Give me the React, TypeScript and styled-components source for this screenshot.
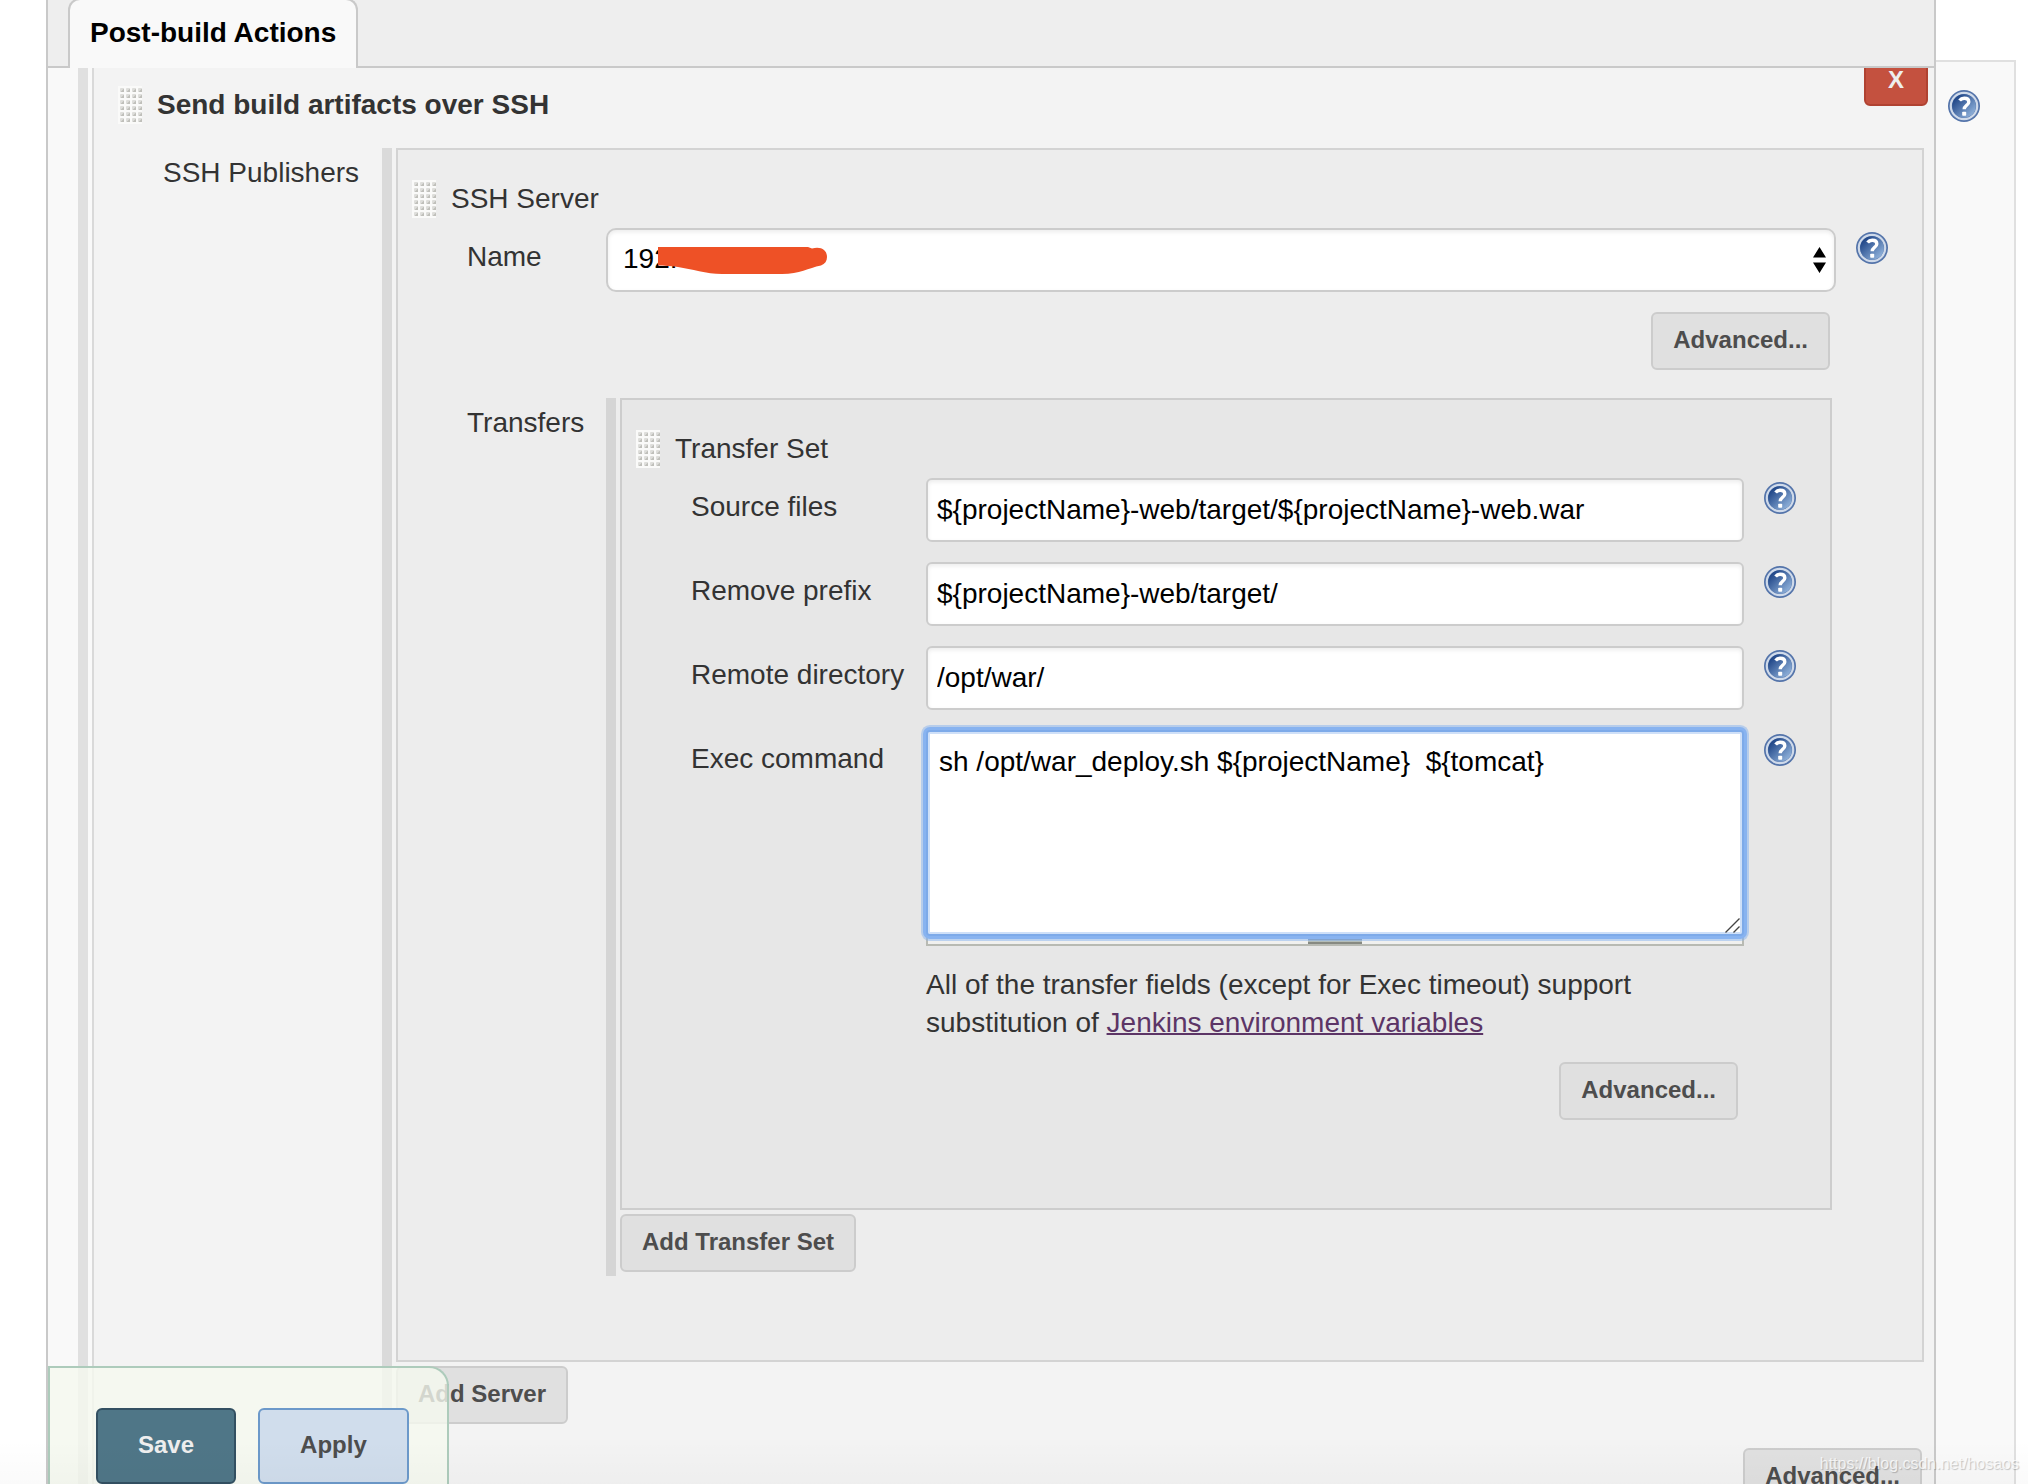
import React, { useId } from 'react';
import styled, { createGlobalStyle } from 'styled-components';

const GlobalStyle = createGlobalStyle`
  *, *::before, *::after { box-sizing: border-box; }
  body {
    margin: 0;
    background: #fff;
    color: #333;
    font: 28px/38px Helvetica, "Liberation Sans", Arial, sans-serif;
  }
  button, input, select, textarea { font-family: inherit; margin: 0; }
`;

const Page = styled.div`
  position: relative;
  display: flex;
  height: 100vh;
  padding: 0 12px 0 46px;
  overflow: hidden;
`;

const ConfigForm = styled.form`
  flex: 1;
  min-width: 0;
  display: flex;
  flex-direction: column;
  background: #f9f9f9;
  border: solid #c9c9c9;
  border-width: 0 2px;
`;

const SidePanel = styled.aside`
  width: 80px;
  margin-top: 60px;
  padding: 28px 12px;
  background: #f9f9f9;
  border: solid #e0e0e0;
  border-width: 2px 2px 0 0;
`;

const TabBar = styled.nav`
  flex: none;
  display: flex;
  height: 68px;
  padding-left: 20px;
  background: #eee;
  border-bottom: 2px solid #c9c9c9;
`;

const Tab = styled.a`
  height: 70px;
  margin-top: -2px;
  padding: 14px 20px 0;
  background: #f9f9f9;
  border: 2px solid #c9c9c9;
  border-bottom: 0;
  border-radius: 12px 12px 0 0;
  color: #000;
  font-weight: bold;
  text-decoration: none;
`;

const Body = styled.div`
  flex: 1;
  min-height: 0;
  display: flex;
  gap: 4px;
  padding-left: 30px;
  overflow: hidden;
`;

const Rail = styled.div<{ $tone: string }>`
  flex: none;
  width: 10px;
  background: ${(p) => p.$tone};
`;

const Step = styled.section`
  flex: 1;
  min-width: 0;
  background: #f3f3f3;
  border-left: 2px solid #d9d9d9;
`;

const StepHeader = styled.header`
  display: flex;
  align-items: flex-start;
  justify-content: space-between;
  height: 80px;
  padding: 0 6px 0 24px;
`;

const StepTitle = styled.div`
  display: flex;
  gap: 15px;
  padding-top: 18px;
`;

const Heading = styled.h2`
  margin: 0;
  font-size: 28px;
  line-height: 38px;
`;

const Field = styled.div<{ $label: number }>`
  display: grid;
  grid-template-columns: ${(p) => p.$label}px minmax(0, 1fr) auto;
`;

const Label = styled.label<{ $nested?: boolean }>`
  padding: ${(p) => (p.$nested ? 6 : 10)}px 0 0 69px;
  white-space: nowrap;
`;

const Repeatable = styled.div<{ $inset: number }>`
  display: flex;
  gap: 4px;
  margin-right: ${(p) => p.$inset}px;
`;

const Stack = styled.div`
  flex: 1;
  min-width: 0;
  display: flex;
  flex-direction: column;
  align-items: flex-start;
  gap: 4px;
  padding-bottom: 4px;
`;

const Group = styled.section<{ $bg: string; $line: string; $bottom: number }>`
  width: 100%;
  padding: 30px 0 ${(p) => p.$bottom}px;
  background: ${(p) => p.$bg};
  border: 2px solid ${(p) => p.$line};
`;

const GroupTitle = styled.div`
  display: flex;
  gap: 15px;
  margin-bottom: 10px;
  padding-left: 14px;
`;

const Fields = styled.div`
  display: flex;
  flex-direction: column;
  gap: 20px;
`;

const HelpCell = styled.div`
  width: 86px;
  padding: 4px 0 0 20px;
`;

const HelpButton = styled.button`
  display: block;
  width: 32px;
  height: 32px;
  padding: 0;
  background: none;
  border: 0;
`;

const TextInput = styled.input`
  width: 100%;
  height: 64px;
  padding: 0 9px;
  background: #fff;
  border: 2px solid #ccc;
  border-radius: 6px;
  box-shadow: inset 0 2px 4px rgba(0, 0, 0, 0.08);
  color: #000;
  font-size: 28px;
`;

const Overlaid = styled.div`
  position: relative;
`;

const Select = styled.select`
  appearance: none;
  width: 100%;
  height: 64px;
  padding: 0 40px 4px 15px;
  background: #fff;
  border: 2px solid #ccc;
  border-radius: 10px;
  box-shadow: inset 0 2px 4px rgba(0, 0, 0, 0.08);
  color: #000;
  font-size: 28px;
`;

const SelectArrows = styled.svg`
  position: absolute;
  top: 19px;
  right: 10px;
  pointer-events: none;
`;

const Redaction = styled.svg`
  position: absolute;
  top: 19px;
  left: 52px;
  pointer-events: none;
`;

const CommandBox = styled.textarea`
  display: block;
  width: 100%;
  height: 206px;
  padding: 11px;
  background: #fff;
  border: 2px solid #7daae9;
  border-radius: 4px;
  box-shadow: 0 0 0 3px #88b3f0, 0 0 0 5px rgba(136, 179, 240, 0.5), inset 0 0 0 2px #cfe0f8;
  color: #000;
  font-size: 28px;
  line-height: 38px;
  outline: none;
  resize: none;
`;

const Resizer = styled.svg`
  position: absolute;
  right: 4px;
  bottom: 3px;
  pointer-events: none;
`;

const DragBar = styled.div`
  display: flex;
  justify-content: center;
  height: 10px;
  background: #f0f0ee;
  border: solid #b8bab3;
  border-width: 0 2px 2px;
`;

const DragGrip = styled.span`
  width: 54px;
  height: 8px;
  background: linear-gradient(#7f93aa 4px, #b4bdb8 4px, #b4bdb8 6px, #878a82 6px);
`;

const Note = styled.p`
  margin: 20px 0;
`;

const Link = styled.a`
  color: #5c3566;
  text-decoration-thickness: 2px;
`;

const ButtonRow = styled.div<{ $right: number }>`
  display: flex;
  justify-content: flex-end;
  padding-right: ${(p) => p.$right}px;
`;

const Spaced = styled.div`
  padding: 20px 0 28px;
`;

const PlainButton = styled.button`
  height: 58px;
  padding: 0 20px 2px;
  background: #e0e0e0;
  border: 2px solid #ccc;
  border-radius: 6px;
  color: #4d4d4d;
  font-size: 24px;
  font-weight: bold;
  white-space: nowrap;
`;

const DeleteButton = styled(PlainButton)`
  width: 64px;
  margin-top: -20px;
  padding: 6px 0 0;
  background: #c4513f;
  border-color: #b04231;
  color: #eee;
`;

const SaveBar = styled.div`
  position: absolute;
  bottom: 0;
  left: 48px;
  display: flex;
  gap: 22px;
  height: 118px;
  padding: 40px 38px 0 46px;
  background: rgba(245, 249, 239, 0.8);
  border: solid #adcbbb;
  border-width: 2px 2px 0;
  border-radius: 0 20px 0 0;
`;

const SaveButton = styled(PlainButton)<{ $primary?: boolean }>`
  height: 76px;
  padding: 0 40px 2px;
  background: ${(p) => (p.$primary ? '#4f7687' : '#d0ddec')};
  border-color: ${(p) => (p.$primary ? '#335062' : '#6c99ca')};
  color: ${(p) => (p.$primary ? '#eee' : '#4d4d4d')};
`;

const BottomShade = styled.div`
  position: absolute;
  right: 0;
  bottom: 0;
  left: 0;
  height: 44px;
  background: linear-gradient(rgba(0, 0, 0, 0), rgba(0, 0, 0, 0.02));
  pointer-events: none;
`;

const Watermark = styled.span`
  position: absolute;
  right: 9px;
  bottom: 10px;
  color: rgba(255, 255, 255, 0.75);
  font-size: 16px;
  line-height: 20px;
  text-shadow: 1px 1px 1px rgba(0, 0, 0, 0.22);
  pointer-events: none;
`;

function DragHandle() {
  const id = useId();
  return (
    <svg width="24" height="38" viewBox="0 0 24 38" aria-hidden="true">
      <defs>
        <pattern id={id} x="1" y="1" width="6" height="6" patternUnits="userSpaceOnUse">
          <rect x="1" y="1" width="4" height="4" rx="1" fill="#dededb" />
          <path d="M1.500 5 5 1.500V5Z" fill="#bfbfba" />
        </pattern>
      </defs>
      <rect width="24" height="38" fill="#fafaf9" />
      <rect x="1" y="1" width="23" height="36" fill={`url(#${id})`} />
    </svg>
  );
}

function Help({ topic }: { topic: string }) {
  const id = useId();
  return (
    <HelpButton type="button" aria-label={`Help for ${topic}`}>
      <svg width="32" height="32" viewBox="0 0 32 32">
        <defs>
          <linearGradient id={id} x1="0.15" y1="0.2" x2="0.85" y2="0.9">
            <stop offset="0" stopColor="#23498a" />
            <stop offset="1" stopColor="#8fb1da" />
          </linearGradient>
        </defs>
        <circle cx="16" cy="16" r="16" fill="#5474aa" />
        <circle cx="16" cy="16" r="13.2" fill="none" stroke="#cfdaea" strokeWidth="2.2" />
        <circle cx="16" cy="16" r="11.8" fill={`url(#${id})`} />
        <path
          d="M11.6 10.4C12.8 8.800 14.400 8.200 16.200 8.200c2.900 0 4.600 1.500 4.600 3.700 0 3.300-4.600 3.500-4.600 7.300"
          fill="none"
          stroke="#fff"
          strokeWidth="3.4"
        />
        <rect x="14.200" y="21.800" width="4" height="4" rx="0.8" fill="#fff" />
      </svg>
    </HelpButton>
  );
}

const transferFields = [
  { id: 'source', label: 'Source files', value: '${projectName}-web/target/${projectName}-web.war' },
  { id: 'prefix', label: 'Remove prefix', value: '${projectName}-web/target/' },
  { id: 'remote', label: 'Remote directory', value: '/opt/war/' },
];

function TransferSet() {
  return (
    <Group $bg="#e7e7e7" $line="#cdcdcd" $bottom={88}>
      <GroupTitle>
        <DragHandle />
        <span>Transfer Set</span>
      </GroupTitle>
      <Fields>
        {transferFields.map((f) => (
          <Field key={f.id} $label={304}>
            <Label htmlFor={f.id}>{f.label}</Label>
            <TextInput id={f.id} defaultValue={f.value} />
            <HelpCell>
              <Help topic={f.label} />
            </HelpCell>
          </Field>
        ))}
        <Field $label={304}>
          <Label htmlFor="exec">Exec command</Label>
          <div>
            <Overlaid>
              <CommandBox
                id="exec"
                spellCheck={false}
                defaultValue={'sh /opt/war_deploy.sh ${projectName}  ${tomcat}'}
              />
              <Resizer width="15" height="15" viewBox="0 0 15 15" aria-hidden="true">
                <path d="M0.5 14.5 14.5 0.5M8.5 14.5 14.5 8.5" stroke="#444" strokeWidth="1.4" />
              </Resizer>
            </Overlaid>
            <DragBar>
              <DragGrip />
            </DragBar>
            <Note>
              All of the transfer fields (except for Exec timeout) support substitution of{' '}
              <Link href="#variables">Jenkins environment variables</Link>
            </Note>
            <ButtonRow $right={6}>
              <PlainButton type="button">Advanced...</PlainButton>
            </ButtonRow>
          </div>
          <HelpCell>
            <Help topic="Exec command" />
          </HelpCell>
        </Field>
      </Fields>
    </Group>
  );
}

function SshServer() {
  return (
    <Group $bg="#ededed" $line="#d3d3d3" $bottom={84}>
      <GroupTitle>
        <DragHandle />
        <span>SSH Server</span>
      </GroupTitle>
      <Field $label={208}>
        <Label htmlFor="server">Name</Label>
        <Overlaid>
          <Select id="server">
            <option>192.</option>
          </Select>
          <SelectArrows width="13" height="26" viewBox="0 0 13 26" aria-hidden="true">
            <path d="M0 10.5 6.5 0 13 10.5ZM0 15.5 6.5 26 13 15.5Z" />
          </SelectArrows>
          <Redaction width="170" height="28" viewBox="0 0 170 28" aria-hidden="true">
            <path
              d="M0 0H150L154 1.5C163 -1 169 3 169 10C169 14 167 17 163 18.5C150 21 142 27 124 27H64C48 27 34 22 20 20C13 19 6 18.500 0 18.500Z"
              fill="#ee5126"
            />
          </Redaction>
        </Overlaid>
        <HelpCell>
          <Help topic="Name" />
        </HelpCell>
      </Field>
      <Spaced>
        <ButtonRow $right={92}>
          <PlainButton type="button">Advanced...</PlainButton>
        </ButtonRow>
      </Spaced>
      <Field $label={208}>
        <Label as="div" $nested>
          Transfers
        </Label>
        <Repeatable $inset={90}>
          <Rail $tone="#d5d5d5" />
          <Stack>
            <TransferSet />
            <PlainButton type="button">Add Transfer Set</PlainButton>
          </Stack>
        </Repeatable>
      </Field>
    </Group>
  );
}

export default function App() {
  return (
    <>
      <GlobalStyle />
      <Page>
        <ConfigForm onSubmit={(e: React.FormEvent) => e.preventDefault()}>
          <TabBar>
            <Tab href="#post-build">Post-build Actions</Tab>
          </TabBar>
          <Body>
            <Rail $tone="#e0e0e0" />
            <Step>
              <StepHeader>
                <StepTitle>
                  <DragHandle />
                  <Heading>Send build artifacts over SSH</Heading>
                </StepTitle>
                <DeleteButton type="button">X</DeleteButton>
              </StepHeader>
              <Field $label={288}>
                <Label as="div" $nested>
                  SSH Publishers
                </Label>
                <Repeatable $inset={10}>
                  <Rail $tone="#dadada" />
                  <Stack>
                    <SshServer />
                    <PlainButton type="button">Add Server</PlainButton>
                  </Stack>
                </Repeatable>
              </Field>
              <Spaced>
                <ButtonRow $right={12}>
                  <PlainButton type="button">Advanced...</PlainButton>
                </ButtonRow>
              </Spaced>
            </Step>
          </Body>
        </ConfigForm>
        <SidePanel>
          <Help topic="Send build artifacts over SSH" />
        </SidePanel>
        <SaveBar>
          <SaveButton type="submit" $primary>
            Save
          </SaveButton>
          <SaveButton type="button">Apply</SaveButton>
        </SaveBar>
        <BottomShade />
        <Watermark>https://blog.csdn.net/hosaos</Watermark>
      </Page>
    </>
  );
}
